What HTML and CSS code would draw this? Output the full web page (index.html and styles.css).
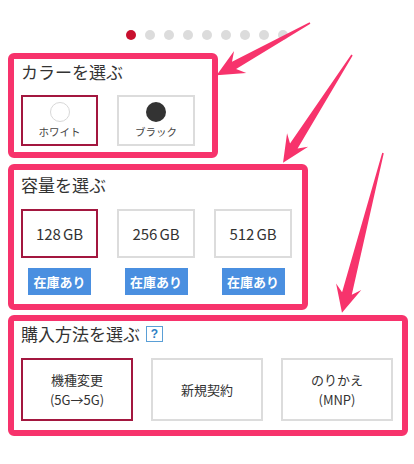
FILE: index.html
```html
<!DOCTYPE html>
<html lang="ja">
<head>
<meta charset="utf-8">
<title>選ぶ</title>
<link rel="stylesheet" href="styles.css">
</head>
<body>
<div class="page">
  <div class="dots">
    <span class="dot active"></span><span class="dot"></span><span class="dot"></span><span class="dot"></span><span class="dot"></span><span class="dot"></span><span class="dot"></span><span class="dot"></span><span class="dot"></span>
  </div>

  <section class="box box-color">
    <h2 class="title">カラーを選ぶ</h2>
    <div class="swatches">
      <div class="opt swatch selected"><span class="circle white"></span><span class="swatch-label">ホワイト</span></div>
      <div class="opt swatch"><span class="circle black"></span><span class="swatch-label">ブラック</span></div>
    </div>
  </section>

  <section class="box box-cap">
    <h2 class="title">容量を選ぶ</h2>
    <div class="caps">
      <div class="cap-col">
        <div class="opt cap selected">128<span class="gap"></span>GB</div>
        <div class="stock">在庫あり</div>
      </div>
      <div class="cap-col">
        <div class="opt cap">256<span class="gap"></span>GB</div>
        <div class="stock">在庫あり</div>
      </div>
      <div class="cap-col">
        <div class="opt cap">512<span class="gap"></span>GB</div>
        <div class="stock">在庫あり</div>
      </div>
    </div>
  </section>

  <section class="box box-buy">
    <h2 class="title">購入方法を選ぶ<span class="help">?</span></h2>
    <div class="buys">
      <div class="opt buy selected">機種変更<br>(5G→5G)</div>
      <div class="opt buy">新規契約</div>
      <div class="opt buy">のりかえ<br>(MNP)</div>
    </div>
  </section>

  <svg class="arrows" width="414" height="464" viewBox="0 0 414 464" xmlns="http://www.w3.org/2000/svg">
    <g fill="#f7336c">
      <polygon transform="translate(310,23) rotate(150.8)" points="0,-0.8 87,-4.2 80,-12.5 107,0 80,12.5 87,4.2 0,0.8"/>
      <polygon transform="translate(352,55) rotate(122.6)" points="0,-0.8 108,-4.5 101,-12.5 128,0 101,12.5 108,4.5 0,0.8"/>
      <polygon transform="translate(383,153) rotate(104.4)" points="0,-0.8 145,-5 138,-13 165,0 138,13 145,5 0,0.8"/>
    </g>
  </svg>
</div>
</body>
</html>
```

FILE: styles.css
```css
body {
  margin: 0;
  background: #fff;
  color: #333;
  font-family: "Noto Sans CJK JP", "Noto Sans", sans-serif;
}

.page {
  position: relative;
  width: 414px;
  height: 464px;
  overflow: hidden;
}

.dots {
  display: flex;
  justify-content: center;
  gap: 9px;
  padding-top: 30px;
  height: 10px;
}

.dot {
  width: 10px;
  height: 10px;
  border-radius: 50%;
  background: #dcdcdc;
}

.dot.active {
  background: #c8102e;
}

.box {
  box-sizing: border-box;
  margin-left: 8px;
  border: 6px solid #f7336c;
  border-radius: 6px;
  background: #fff;
  padding-left: 7px;
}

.title {
  margin: 0;
  font-size: 17px;
  font-weight: 400;
  line-height: 24px;
  height: 24px;
  display: flex;
  align-items: center;
  color: #333;
}

.opt {
  box-sizing: border-box;
  border: 2px solid #dcdcdc;
  background: #fff;
}

.opt.selected {
  border-color: #a3173f;
}

/* color box */
.box-color {
  width: 210px;
  height: 105px;
  margin-top: 13px;
  padding-top: 1px;
}

.swatches {
  display: grid;
  grid-template-columns: 77px 78px;
  column-gap: 19px;
  margin-top: 11px;
}

.swatch {
  height: 51px;
  display: flex;
  flex-direction: column;
  align-items: center;
  padding-top: 5px;
}

.circle {
  width: 20px;
  height: 20px;
  border-radius: 50%;
  box-sizing: border-box;
}

.circle.white {
  border: 1px solid #d8d8d8;
  background: #fff;
}

.circle.black {
  background: #333;
}

.swatch-label {
  margin-top: 3px;
  font-size: 10.5px;
  line-height: 13px;
  color: #444;
}

/* capacity box */
.box-cap {
  width: 300px;
  height: 146px;
  margin-top: 6px;
  padding-top: 3px;
}

.caps {
  display: grid;
  grid-template-columns: 77px 78px 78px;
  column-gap: 19px;
  margin-top: 12px;
}

.cap-col {
  display: flex;
  flex-direction: column;
  align-items: center;
  gap: 10px;
}

.cap {
  width: 100%;
  height: 49px;
  display: flex;
  align-items: center;
  justify-content: center;
  font-size: 15px;
  color: #333;
}

.gap {
  display: inline-block;
  width: 2px;
}

.stock {
  width: 63px;
  height: 27px;
  background: #4a8fe0;
  color: #fff;
  font-size: 13px;
  font-weight: 700;
  display: flex;
  align-items: center;
  justify-content: center;
}

/* purchase box */
.box-buy {
  width: 400px;
  height: 121px;
  margin-top: 5px;
  padding-top: 1px;
}

.help {
  display: inline-flex;
  align-items: center;
  justify-content: center;
  box-sizing: border-box;
  width: 17px;
  height: 16px;
  margin-left: 6px;
  border: 1.5px solid #5a9fd6;
  color: #2f7fc4;
  font-family: "Liberation Sans", sans-serif;
  font-size: 12px;
  font-weight: 700;
  line-height: 1;
}

.buys {
  display: grid;
  grid-template-columns: 112px 112px 112px;
  column-gap: 18px;
  margin-top: 12px;
}

.buy {
  height: 63px;
  display: flex;
  align-items: center;
  justify-content: center;
  text-align: center;
  font-size: 13px;
  line-height: 20px;
  color: #333;
}

.arrows {
  position: absolute;
  left: 0;
  top: 0;
  pointer-events: none;
}
```
